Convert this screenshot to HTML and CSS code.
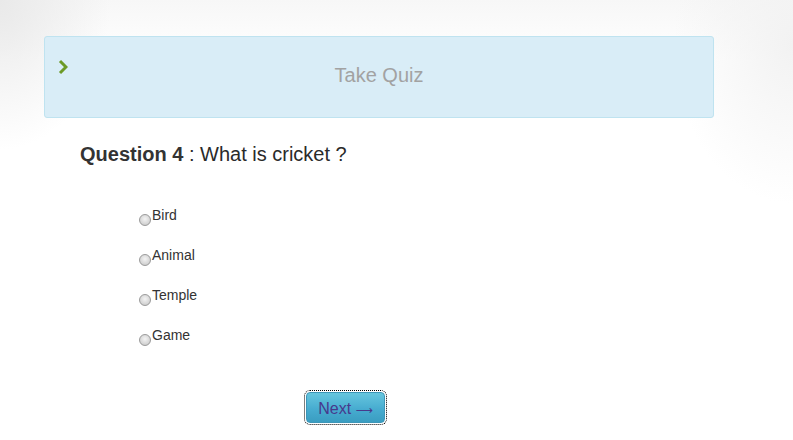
FILE: index.html
```html
<!DOCTYPE html>
<html>
<head>
<meta charset="utf-8">
<link rel="stylesheet" href="styles.css">
</head>
<body>
<div class="page">
  <div class="panel">
    <svg class="chev" width="10" height="16" viewBox="0 0 10 16"><polyline points="2,2 8,8 2,14" fill="none" stroke="#6c9a26" stroke-width="3"/></svg>
    <h2 class="title">Take Quiz</h2>
    <span></span>
  </div>
  <div class="quiz">
    <p class="question"><b>Question 4</b> : What is cricket ?</p>
    <div class="options">
      <label class="opt"><input type="radio" name="q4"><span>Bird</span></label>
      <label class="opt"><input type="radio" name="q4"><span>Animal</span></label>
      <label class="opt"><input type="radio" name="q4"><span>Temple</span></label>
      <label class="opt"><input type="radio" name="q4"><span>Game</span></label>
    </div>
    <div class="actions"><button class="next">Next <span class="arrow">&#x27F6;</span></button></div>
  </div>
</div>
</body>
</html>
```

FILE: styles.css
```css
html, body { margin: 0; padding: 0; }
body {
  width: 793px;
  height: 440px;
  font-family: "Liberation Sans", Arial, sans-serif;
  color: #222;
  background:
    radial-gradient(ellipse 110px 150px at 0 0, #e9e9e9, rgba(255,255,255,0)),
    radial-gradient(ellipse 120px 160px at 100% 10%, #f2f2f2, rgba(255,255,255,0)),
    linear-gradient(#f7f7f7, #ffffff 60px);
  overflow: hidden;
}
.page { padding: 36px 0 0 44px; }
.panel {
  width: 668px;
  height: 80px;
  box-sizing: content-box;
  border: 1px solid #bfe3f0;
  border-radius: 3px;
  background: #d9edf7;
  display: grid;
  grid-template-columns: 1fr auto 1fr;
  align-items: center;
}
.chev { align-self: start; margin: 22px 0 0 13px; display: block; }
.title {
  margin: 0 0 3px 0;
  font-weight: normal;
  font-size: 20px;
  color: #a2a2a2;
}
.quiz { padding-left: 36px; }
.question {
  margin: 25px 0 0 0;
  font-size: 20px;
  line-height: 23px;
  color: #2a2a2a;
}
.question b { color: #333; }
.options {
  margin: 41px 0 0 59px;
  display: flex;
  flex-direction: column;
  gap: 24px;
}
.opt {
  display: flex;
  align-items: flex-end;
  font-size: 14px;
  line-height: 16px;
  height: 16px;
  color: #333;
}
.opt input {
  appearance: none;
  -webkit-appearance: none;
  width: 12px;
  height: 12px;
  margin: 0 1px -3px 0;
  border: 1px solid #9a9a9a;
  border-radius: 50%;
  background: radial-gradient(circle at 50% 40%, #f4f4f4, #d2d2d2 70%, #c4c4c4);
  box-sizing: border-box;
  flex: none;
}
.actions { margin: 49px 0 0 226px; }
.next {
  width: 79px;
  height: 31px;
  border: 1px solid #3c96b8;
  border-radius: 4px;
  background: linear-gradient(#66c6de, #47acd0 55%, #3a9dc1);
  color: #47398c;
  font-family: "Liberation Sans", Arial, sans-serif;
  font-size: 16px;
  padding: 2px 0 0 0;
  outline: 1px dotted #000;
  outline-offset: 1px;
}
.arrow { font-family: "DejaVu Sans", sans-serif; font-size: 12px; }
```
